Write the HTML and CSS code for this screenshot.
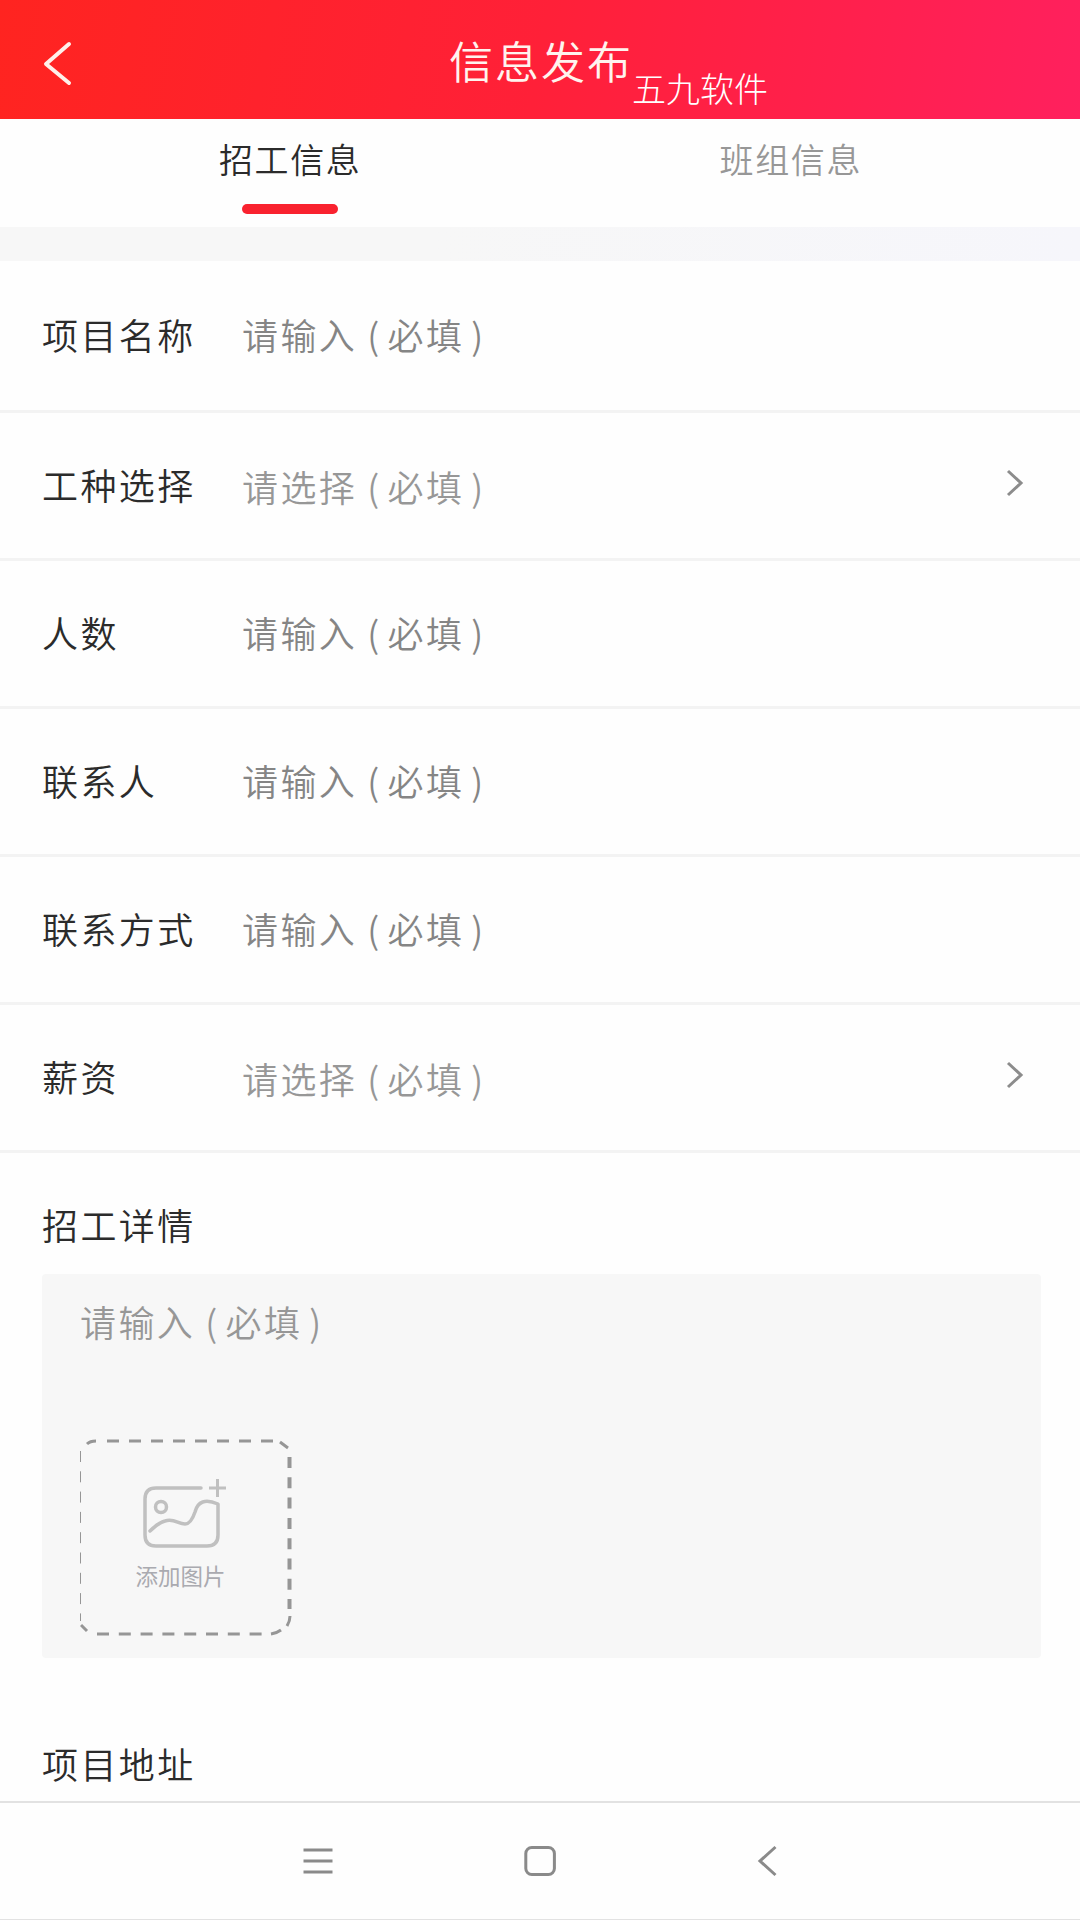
FILE: index.html
```html
<!DOCTYPE html>
<html lang="zh-CN">
<head>
    <meta charset="UTF-8">
    <meta name="viewport" content="width=device-width, initial-scale=1.0">
    <title>信息发布</title>
    <link rel="stylesheet" href="styles.css">
</head>
<body>
    <header class="header">
        <svg class="back" width="32" height="48" viewBox="0 0 32 48">
            <path d="M28 4 L5 24 L28 43"/>
        </svg>
        <h1>信息发布</h1>
        <span class="mark">五九软件</span>
    </header>

    <nav class="tabs">
        <a class="tab active">招工信息</a>
        <a class="tab">班组信息</a>
    </nav>
    <div class="band"></div>

    <main class="form">
        <div class="row">
            <label class="label">项目名称</label>
            <span class="value">请输入<span class="open">(</span>必填<span class="close">)</span></span>
        </div>
        <div class="row">
            <label class="label">工种选择</label>
            <span class="value select">请选择<span class="open">(</span>必填<span class="close">)</span></span>
            <svg class="arrow" width="18" height="28" viewBox="0 0 18 28"><path d="M2 2 L15 14 L2 26"/></svg>
        </div>
        <div class="row">
            <label class="label">人数</label>
            <span class="value">请输入<span class="open">(</span>必填<span class="close">)</span></span>
        </div>
        <div class="row">
            <label class="label">联系人</label>
            <span class="value">请输入<span class="open">(</span>必填<span class="close">)</span></span>
        </div>
        <div class="row">
            <label class="label">联系方式</label>
            <span class="value">请输入<span class="open">(</span>必填<span class="close">)</span></span>
        </div>
        <div class="row">
            <label class="label">薪资</label>
            <span class="value select">请选择<span class="open">(</span>必填<span class="close">)</span></span>
            <svg class="arrow" width="18" height="28" viewBox="0 0 18 28"><path d="M2 2 L15 14 L2 26"/></svg>
        </div>

        <section class="detail">
            <label class="label">招工详情</label>
            <div class="detail-box">
                <span class="value light">请输入<span class="open">(</span>必填<span class="close">)</span></span>
                <div class="upload">
                    <svg class="dashes" width="212" height="198" viewBox="0 0 212 198">
                        <path class="dash-corner" d="M7 5 Q10 2 16 2 M200 3 L208 9"/>
                        <path class="dash-top" d="M27 2 H194"/>
                        <path class="dash-side" d="M209.500 18 V170"/>
                        <path class="dash-corner" d="M210 177 Q210 182 207 187 M201 191 Q197 194 191 195 M1 186 L7 192"/>
                        <path class="dash-bottom" d="M17 195 H182"/>
                        <path class="dash-left" d="M0.500 12 V182"/>
                    </svg>
                    <svg class="picture" width="84" height="70" viewBox="0 0 84 70">
                        <path d="M58 9 H13 Q2 9 2 20 V56 Q2 67 13 67 H64 Q75 67 75 56 V25 Q56 17 52 33 Q48 45 42 45 C35 45 31 39 22 42 Q15 44 7 52"/>
                        <circle cx="18" cy="28" r="5.500"/>
                        <path class="plus" d="M66 9 H83 M74.500 0 V18"/>
                    </svg>
                    <span class="upload-text">添加图片</span>
                </div>
            </div>
        </section>

        <section class="address">
            <label class="label">项目地址</label>
        </section>
    </main>

    <footer class="navbar">
        <svg width="32" height="32" viewBox="0 0 32 32"><path d="M1.500 5 H30.500 M1.500 16 H30.500 M1.500 27 H30.500"/></svg>
        <svg width="32" height="32" viewBox="0 0 32 32"><rect x="1.800" y="2.500" width="28.600" height="27" rx="6"/></svg>
        <svg width="32" height="32" viewBox="0 0 32 32"><path d="M29.500 2 L14 16 L29.500 30"/></svg>
    </footer>
</body>
</html>
```

FILE: styles.css
```css
* {
    box-sizing: border-box;
}

body {
    margin: 0;
    width: 1080px;
    height: 1920px;
    display: flex;
    flex-direction: column;
    overflow: hidden;
    background: #fefefe;
    color: #2b2b2b;
    font-family: "Noto Sans CJK SC", sans-serif;
    font-weight: 350;
}

svg {
    fill: none;
    flex-shrink: 0;
}

.header {
    position: relative;
    height: 119px;
    flex-shrink: 0;
    display: flex;
    justify-content: center;
    background: linear-gradient(100deg, #ff2420 0%, #ff2038 50%, #ff205e 100%);
    color: #fff3ee;
}

.header h1 {
    margin: 0;
    padding-left: 2px;
    font-size: 44px;
    font-weight: 350;
    letter-spacing: 2px;
    line-height: 121px;
}

.back {
    position: absolute;
    left: 41px;
    top: 40px;
    stroke: #fff0ea;
    stroke-width: 4;
    stroke-linecap: round;
    stroke-linejoin: round;
}

.mark {
    position: absolute;
    left: 632px;
    top: 63px;
    font-size: 34px;
    font-weight: 300;
    line-height: 50px;
    color: #fff;
}

.tabs {
    display: flex;
    justify-content: space-between;
    height: 108px;
    flex-shrink: 0;
    padding: 0 218px 0 219px;
}

.tab {
    display: flex;
    flex-direction: column;
    align-items: center;
    font-size: 34px;
    letter-spacing: 1.600px;
    line-height: 80px;
    color: #979797;
}

.tab.active {
    color: #2b2b2b;
}

.tab.active::after {
    content: "";
    width: 96px;
    height: 10px;
    margin-top: 5px;
    border-radius: 5px;
    background: #f9222f;
}

.band {
    height: 34px;
    flex-shrink: 0;
    background: linear-gradient(90deg, #f7f7f7 40%, #f6f6fb);
}

.form {
    flex: 1;
    min-height: 0;
}

.row {
    display: flex;
    align-items: center;
    height: 148px;
    padding: 0 56px 0 42px;
    border-bottom: 3px solid #f3f3f3;
}

.row:first-child {
    height: 152px;
}

.label {
    width: 200px;
    padding-bottom: 3px;
    font-size: 36px;
    letter-spacing: 2.400px;
    line-height: 50px;
}

.value {
    padding-bottom: 3px;
    font-size: 36px;
    letter-spacing: 2.400px;
    line-height: 50px;
    color: #858585;
    white-space: nowrap;
}

.value.select {
    padding-top: 4px;
    color: #979797;
}

.value.light {
    color: #979797;
}

.open {
    margin: 0 6px 0 10px;
}

.close {
    margin-left: 7px;
}

.arrow {
    margin-left: auto;
    margin-bottom: 6px;
    stroke: #8c8c8c;
    stroke-width: 3;
}

.detail {
    padding: 46px 39px 0 42px;
}

.detail .label,
.address .label {
    display: block;
}

.detail-box {
    height: 384px;
    margin-top: 22px;
    padding: 22px 38px 0;
    border-radius: 4px;
    background: #f7f7f7;
}

.detail-box .value {
    display: block;
}

.upload {
    position: relative;
    width: 212px;
    height: 198px;
    margin-top: 90px;
    display: flex;
    flex-direction: column;
    align-items: center;
    padding-top: 40px;
}

.dashes {
    position: absolute;
    left: 0;
    top: 0;
    stroke: #969696;
    stroke-width: 3;
}

.dash-top {
    stroke-dasharray: 12 10;
}

.dash-side {
    stroke-width: 4;
    stroke-dasharray: 11 9.300;
}

.dash-bottom {
    stroke-dasharray: 12 9.800;
}

.dash-left {
    stroke-width: 1;
    stroke-dasharray: 11 9.300;
}

.picture {
    margin-right: 3px;
    stroke: #c0c0c0;
    stroke-width: 3.500;
    stroke-linecap: round;
    stroke-linejoin: round;
}

.plus {
    stroke-width: 3;
    stroke-linecap: butt;
}

.upload-text {
    padding-right: 11px;
    margin-top: 9px;
    font-size: 22.500px;
    font-weight: 400;
    line-height: 34px;
    color: #aaaab0;
}

.address {
    padding: 80px 42px 0;
}

.navbar {
    display: flex;
    justify-content: center;
    align-items: center;
    gap: 190px;
    height: 119px;
    flex-shrink: 0;
    border-top: 2px solid #e2e2e2;
    border-bottom: 1px solid #e2e2e2;
    stroke: #8a8a8a;
    stroke-width: 3;
}
```
